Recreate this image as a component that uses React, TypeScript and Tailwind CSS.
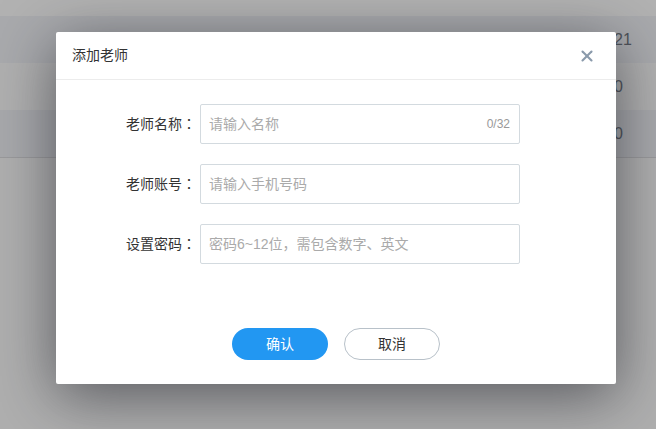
import { X } from "lucide-react";

const rows = [
  { value: "21", bg: "bg-[#a9aaad]" },
  { value: "0", bg: "bg-[#b0b0b0]" },
  { value: "0", bg: "bg-[#a8a9ac]" },
];

const fields = [
  { label: "老师名称", placeholder: "请输入名称", counter: "0/32" },
  { label: "老师账号", placeholder: "请输入手机号码" },
  { label: "设置密码", placeholder: "密码6~12位，需包含数字、英文" },
];

function Field({ label, placeholder, counter }: { label: string; placeholder: string; counter?: string }) {
  return (
    <div className="flex items-center">
      <label className="w-[144px] pr-[4px] text-right text-[14px] text-[#333]">
        {label}
        {/* centred full-width colon */}
        <span style={{ fontFamily: '"Noto Sans CJK TC", sans-serif' }}>：</span>
      </label>
      <div className="relative w-[320px] h-10">
        <input
          type="text"
          placeholder={placeholder}
          className="w-full h-full border border-[#d3dadf] rounded-[2px] pl-2 pr-14 text-[14px] text-[#333] placeholder-[#aaa] outline-none"
        />
        {counter && (
          <span className="absolute right-[10px] top-1/2 -translate-y-1/2 text-[12px] text-[#999]">{counter}</span>
        )}
      </div>
    </div>
  );
}

export default function App() {
  return (
    <div
      className="relative w-[656px] h-[429px] overflow-hidden bg-[#afafaf]"
      style={{ fontFamily: '"Liberation Sans", "Noto Sans CJK SC", sans-serif' }}
    >
      {/* dimmed table behind the dialog */}
      <div className="h-4 bg-[#b2b2b2]" />
      {rows.map((r, i) => (
        <div key={i} className={`h-[47px] flex items-center pl-[614px] text-[16px] text-[#4e5259] ${r.bg}`}>
          {r.value}
        </div>
      ))}
      <div className="h-px bg-[#9a9a9c]" />

      {/* dialog */}
      <div className="absolute left-[56px] top-[32px] w-[560px] h-[352px] bg-white rounded-[2px] shadow-[0_12px_60px_rgba(30,32,40,0.6)] flex flex-col">
        <div className="h-[48px] flex items-center justify-between pl-4 pr-[20px] border-b border-[#ececec]">
          <span className="text-[14px] text-[#333]">添加老师</span>
          <X className="w-[18px] h-[18px] text-[#8a9aab]" strokeWidth={2.8} />
        </div>
        <div className="flex flex-col gap-5 pt-6">
          {fields.map((f) => (
            <Field key={f.label} {...f} />
          ))}
        </div>
        <div className="flex justify-center gap-4 mt-16">
          <button className="w-24 h-8 rounded-full bg-[#2297f2] text-white text-[14px]">确认</button>
          <button className="w-24 h-8 rounded-full border border-[#b8c1c9] text-[#333] text-[14px]">取消</button>
        </div>
      </div>
    </div>
  );
}
